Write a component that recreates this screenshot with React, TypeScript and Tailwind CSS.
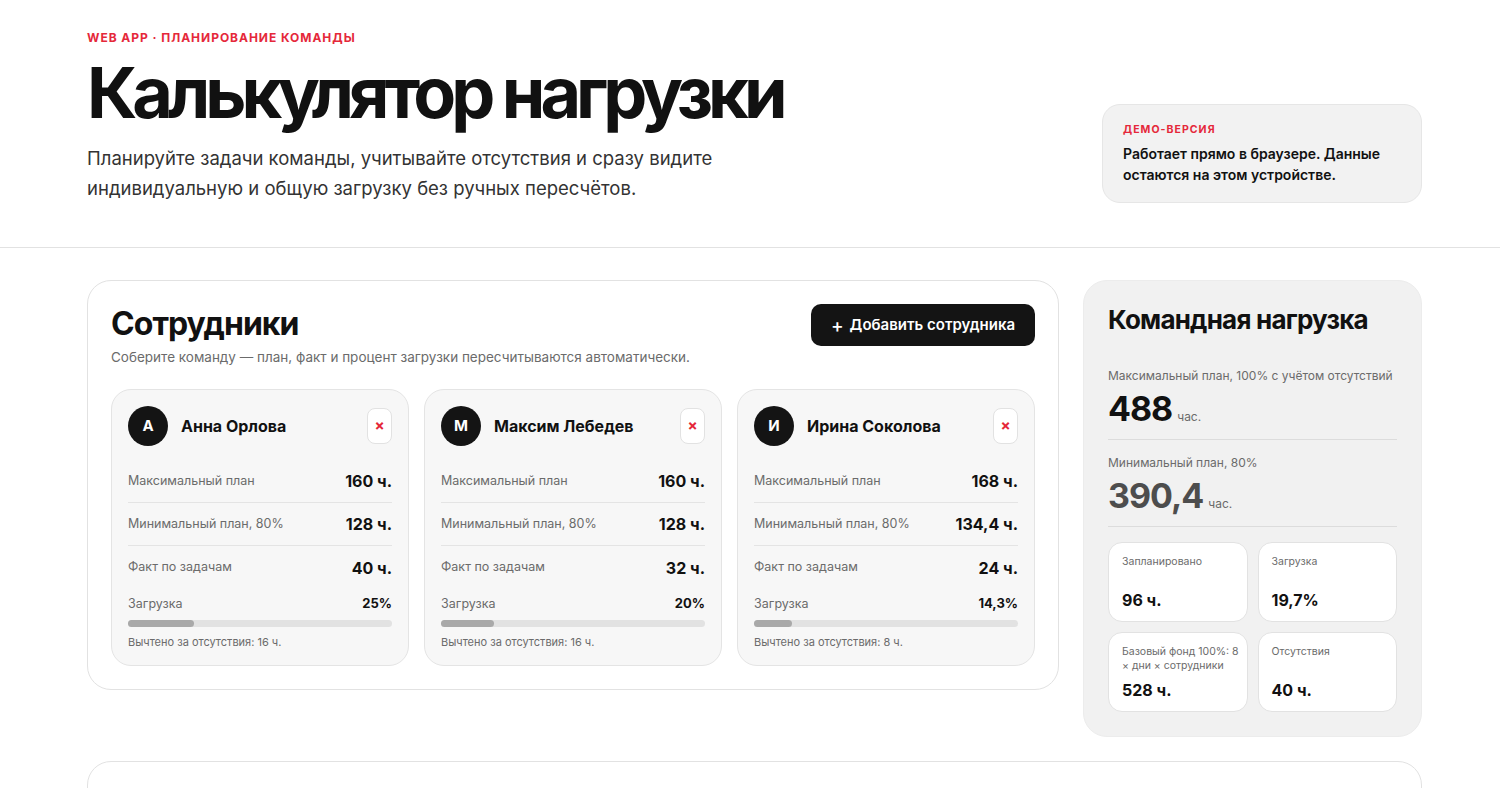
const employees = [
  { initial: "А", name: "Анна Орлова", max: "160 ч.", min: "128 ч.", fact: "40 ч.", load: "25%", pct: 25, absent: "16 ч." },
  { initial: "М", name: "Максим Лебедев", max: "160 ч.", min: "128 ч.", fact: "32 ч.", load: "20%", pct: 20, absent: "16 ч." },
  { initial: "И", name: "Ирина Соколова", max: "168 ч.", min: "134,4 ч.", fact: "24 ч.", load: "14,3%", pct: 14.3, absent: "8 ч." },
];

function Row({ label, value, last }: { label: string; value: string; last?: boolean }) {
  return (
    <div className={`flex h-[43px] items-center justify-between ${last ? "" : "border-b border-[#e4e4e4]"}`}>
      <span className="text-[12.5px] text-[#6b6b6b]">{label}</span>
      <span className="text-[16px] font-bold text-[#111]">{value}</span>
    </div>
  );
}

function EmployeeCard({ e }: { e: (typeof employees)[number] }) {
  return (
    <div className="rounded-[20px] border border-[#e4e4e4] bg-[#f7f7f7] px-[16px] pt-[16px] pb-[15px]">
      <div className="flex items-center justify-between">
        <div className="flex items-center gap-[13px]">
          <div className="flex h-[40px] w-[40px] items-center justify-center rounded-full bg-[#141414] text-[15px] font-bold text-white">
            {e.initial}
          </div>
          <span className="text-[16px] font-bold text-[#111]">{e.name}</span>
        </div>
        <button className="flex h-[36px] w-[25px] items-center justify-center rounded-[8px] border border-[#e2e2e2] bg-white text-[15px] font-bold text-[#e5283a]">
          ×
        </button>
      </div>
      <div className="mt-[14px]">
        <Row label="Максимальный план" value={e.max} />
        <Row label="Минимальный план, 80%" value={e.min} />
        <Row label="Факт по задачам" value={e.fact} last />
      </div>
      <div className="mt-[5px] flex items-center justify-between">
        <span className="text-[12.5px] text-[#6b6b6b]">Загрузка</span>
        <span className="text-[13px] font-bold text-[#111]">{e.load}</span>
      </div>
      <div className="mt-[6px] h-[7px] w-full rounded-full bg-[#e2e2e2]">
        <div className="h-full rounded-full bg-[#a9a9a9]" style={{ width: `${e.pct}%` }} />
      </div>
      <p className="mt-[7px] text-[11px] text-[#6b6b6b]">Вычтено за отсутствия: {e.absent}</p>
    </div>
  );
}

function Stat({ lines, value }: { lines: string[]; value: string }) {
  return (
    <div className="flex h-[80px] flex-col justify-between rounded-[14px] border border-[#e2e2e2] bg-white px-[13px] pt-[12px] pb-[9px]">
      <span className="text-[10.5px] leading-[14px] text-[#6b6b6b]">
        {lines.map((l) => (
          <span key={l} className="block whitespace-nowrap">
            {l}
          </span>
        ))}
      </span>
      <span className="text-[16px] font-bold text-[#111]">{value}</span>
    </div>
  );
}

export default function App() {
  return (
    <div className="min-h-screen bg-white text-[#111]" style={{ fontFamily: "Inter, 'Noto Sans', sans-serif" }}>
      <header className="border-b border-[#e2e2e2]">
        <div className="ml-[87px] flex w-[1335px] items-end justify-between pt-[30px] pb-[44px]">
          <div>
            <p className="text-[12px] leading-[16px] font-bold tracking-[0.08em] text-[#e5283a]">WEB APP · ПЛАНИРОВАНИЕ КОМАНДЫ</p>
            <h1 className="mt-[12px] text-[70px] leading-[70px] font-bold tracking-[-0.072em] text-[#111]">Калькулятор нагрузки</h1>
            <p className="mt-[15px] max-w-[660px] text-[18.5px] leading-[30px] text-[#333]">
              Планируйте задачи команды, учитывайте отсутствия и сразу видите индивидуальную и общую загрузку без ручных пересчётов.
            </p>
          </div>
          <div className="w-[320px] rounded-[18px] border border-[#e6e6e6] bg-[#f2f2f2] px-[20px] pt-[18px] pb-[17px]">
            <p className="text-[10.5px] leading-[14px] font-bold tracking-[0.1em] text-[#e5283a]">ДЕМО-ВЕРСИЯ</p>
            <p className="mt-[6px] text-[14px] leading-[21px] font-semibold text-[#111]">
              Работает прямо в браузере. Данные остаются на этом устройстве.
            </p>
          </div>
        </div>
      </header>

      <main className="ml-[87px] w-[1335px] pt-[32px]">
        <div className="grid grid-cols-[minmax(0,1fr)_339px] items-start gap-[24px]">
          <section className="rounded-[24px] border border-[#e2e2e2] bg-white px-[23px] pt-[23px] pb-[23px]">
            <div className="flex items-start justify-between">
              <div>
                <h2 className="mt-[1px] text-[32px] leading-[38px] font-bold tracking-[-0.03em] text-[#111]">Сотрудники</h2>
                <p className="mt-[4px] text-[13.5px] text-[#6b6b6b]">
                  Соберите команду — план, факт и процент загрузки пересчитываются автоматически.
                </p>
              </div>
              <button className="flex h-[42px] w-[224px] items-center justify-center gap-[6px] rounded-[10px] bg-[#141414] text-[15px] font-semibold text-white">
                <span className="text-[19px] leading-none font-medium">+</span>
                Добавить сотрудника
              </button>
            </div>
            <div className="mt-[22px] grid grid-cols-3 gap-[15px]">
              {employees.map((e) => (
                <EmployeeCard key={e.name} e={e} />
              ))}
            </div>
          </section>

          <aside className="rounded-[24px] border border-[#ececec] bg-[#f1f1f1] px-[24px] pt-[22px] pb-[24px]">
            <h2 className="text-[26px] leading-[34px] font-bold tracking-[-0.03em] text-[#111]">Командная нагрузка</h2>
            <div className="mt-[30px] border-b border-[#dcdcdc] pb-[8px]">
              <p className="text-[12px] text-[#6b6b6b]">Максимальный план, 100% с учётом отсутствий</p>
              <p className="mt-[2px] flex items-baseline gap-[5px]">
                <span className="text-[34px] leading-[44px] font-bold tracking-[-0.03em] text-[#111]">488</span>
                <span className="text-[12px] text-[#6b6b6b]">час.</span>
              </p>
            </div>
            <div className="mt-[14px] border-b border-[#dcdcdc] pb-[8px]">
              <p className="text-[12px] text-[#6b6b6b]">Минимальный план, 80%</p>
              <p className="mt-[2px] flex items-baseline gap-[5px]">
                <span className="text-[34px] leading-[44px] font-bold tracking-[-0.03em] text-[#4d4d4d]">390,4</span>
                <span className="text-[12px] text-[#6b6b6b]">час.</span>
              </p>
            </div>
            <div className="mt-[15px] grid grid-cols-2 gap-[10px]">
              <Stat lines={["Запланировано"]} value="96 ч." />
              <Stat lines={["Загрузка"]} value="19,7%" />
              <Stat lines={["Базовый фонд 100%: 8", "× дни × сотрудники"]} value="528 ч." />
              <Stat lines={["Отсутствия"]} value="40 ч." />
            </div>
          </aside>
        </div>

        <section className="mt-[24px] h-[120px] rounded-[24px] border border-[#e2e2e2] bg-white" />
      </main>
    </div>
  );
}
